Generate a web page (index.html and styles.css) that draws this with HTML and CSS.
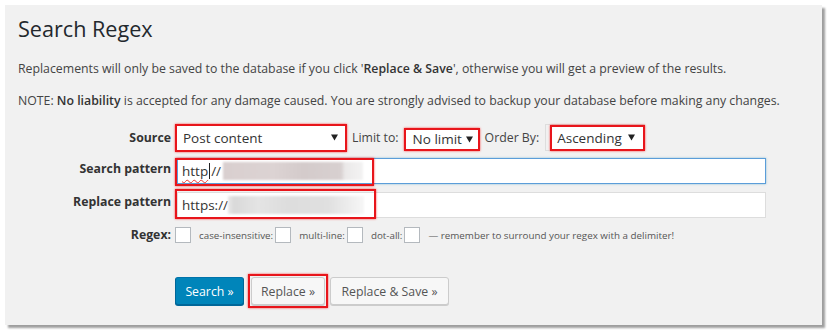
FILE: index.html
```html
<!DOCTYPE html>
<html>
<head>
<meta charset="utf-8">
<link rel="stylesheet" href="styles.css">
</head>
<body>
<div class="frame">
  <h1 class="title">Search Regex</h1>
  <p class="note">Replacements will only be saved to the database if you click '<b>Replace &amp; Save</b>', otherwise you will get a preview of the results.</p>
  <p class="note">NOTE: <b>No liability</b> is accepted for any damage caused. You are strongly advised to backup your database before making any changes.</p>

  <div class="form">
    <div class="row row-source">
      <div class="label">Source</div>
      <div class="field inline">
        <div class="select marked sel-source"><span>Post content</span><svg class="arrow" width="7" height="7" viewBox="0 0 7 7"><path d="M0 0.5H7L3.5 6.5Z" fill="#222"/></svg></div>
        <span class="inl-label">Limit to:</span>
        <div class="select marked sel-limit"><span>No limit</span><svg class="arrow" width="7" height="7" viewBox="0 0 7 7"><path d="M0 0.5H7L3.5 6.5Z" fill="#222"/></svg></div>
        <span class="inl-label">Order By:</span>
        <div class="ghost">
          <div class="select marked sel-order"><span>Ascending</span><svg class="arrow" width="7" height="7" viewBox="0 0 7 7"><path d="M0 0.5H7L3.5 6.5Z" fill="#222"/></svg></div>
        </div>
      </div>
    </div>

    <div class="row row-search">
      <div class="label">Search pattern</div>
      <div class="field">
        <div class="input focus">
          <span class="typed"><span class="spell">http</span><span class="caret"></span>//</span>
          <span class="blur b1"></span>
        </div>
        <div class="mark mark-search"></div>
      </div>
    </div>

    <div class="row row-replace">
      <div class="label">Replace pattern</div>
      <div class="field">
        <div class="input">
          <span class="typed">https://</span>
          <span class="blur b2"></span>
        </div>
        <div class="mark mark-replace"></div>
      </div>
    </div>

    <div class="row row-regex">
      <div class="label">Regex:</div>
      <div class="field inline small">
        <span class="check"></span>
        <span class="opt">case-insensitive:</span><span class="check"></span>
        <span class="opt">multi-line:</span><span class="check"></span>
        <span class="opt">dot-all:</span><span class="check"></span>
        <span class="opt">— remember to surround your regex with a delimiter!</span>
      </div>
    </div>

    <div class="row row-buttons">
      <div class="label"></div>
      <div class="field inline buttons">
        <button class="btn primary">Search »</button>
        <div class="btn-mark"><button class="btn">Replace »</button></div>
        <button class="btn last">Replace &amp; Save »</button>
      </div>
    </div>
  </div>
</div>
</body>
</html>
```

FILE: styles.css
```css
* { box-sizing: border-box; }
html, body { margin: 0; padding: 0; background: #fff; }
body {
  font-family: "Open Sans", "Noto Sans", "DejaVu Sans", sans-serif;
  color: #444;
  width: 828px;
  height: 331px;
  overflow: hidden;
}
.frame {
  margin: 5px 0 0 5px;
  width: 817px;
  height: 320px;
  background: #f1f1f1;
  box-shadow: 3px 3px 2px rgba(0,0,0,0.38);
  padding: 9px 0 0 13px;
}
.title {
  margin: 0;
  font-size: 21.6px;
  font-weight: 400;
  line-height: 30px;
  color: #23282d;
}
.note {
  margin: 16px 0 0 0;
  font-size: 12.3px;
  line-height: 18px;
}
.note + .note { margin-top: 14px; }
.note b { color: #333; font-weight: 600; }

.form { margin-top: 13px; }
.row { display: flex; }
.label {
  width: 153px;
  flex: none;
  text-align: right;
  font-weight: 700;
  font-size: 12.3px;
  color: #333;
}
.field { position: relative; margin-left: 4px; flex: none; }
.inline { display: flex; align-items: center; }

.row-source { height: 29px; align-items: center; }
.row-source .label { line-height: 29px; }
.select {
  background: #fff;
  display: flex;
  align-items: center;
  justify-content: space-between;
  font-size: 13.5px;
  color: #333;
  padding: 0 6px 0 6px;
}
.select .arrow { flex: none; }
.marked {
  border: 2px solid #e8151b;
  box-shadow: 0 0 2px rgba(255,0,0,0.7);
}
.sel-source { width: 172px; height: 28px; padding-right: 7px; }
.sel-limit { width: 76px; height: 23px; margin-top: 3px; padding-left: 7px; padding-right: 5px; }
.sel-order { width: 95px; height: 26px; margin-left: 4px; padding-left: 5px; padding-right: 8px; }
.ghost {
  border: 1px solid #ddd;
  border-right: none;
  height: 27px;
  display: flex;
  align-items: center;
}
.inl-label { font-size: 12.3px; color: #444; margin: 0 5px 0 5px; }
.inl-label + .ghost { margin-left: 1px; }

.row-search { margin-top: 6px; height: 28px; }
.row-search .label, .row-replace .label { padding-top: 2px; line-height: 18px; }
.input {
  width: 589px;
  height: 26px;
  margin-left: 2px;
  margin-top: 1px;
  background: #fff;
  border: 1px solid #ddd;
  display: flex;
  align-items: center;
  padding-left: 4px;
  font-size: 13.5px;
  color: #333;
}
.input.focus { border-color: #5b9dd9; box-shadow: 0 0 2px rgba(30,140,190,0.5); margin-top: 0; }
.typed { position: relative; white-space: nowrap; }
.spell {
  text-decoration: underline wavy #e33;
  text-decoration-thickness: 1px;
  text-underline-offset: 3px;
}
.caret {
  display: inline-block;
  width: 1px;
  height: 16px;
  background: #222;
  vertical-align: -3px;
  margin: 0 1px;
}
.blur {
  display: inline-block;
  height: 18px;
  filter: blur(1px);
}
.b1 {
  width: 140px;
  margin-left: 2px;
  background: linear-gradient(90deg, #d9cfcf 0, #dcd3d3 50px, #d4cbcb 80px, #d8d0d0 118px, #ebe9e9 122px, #f3f3f3 140px);
}
.b2 {
  width: 136px;
  margin-left: 0;
  background: linear-gradient(90deg, #e9e9e9 0, #d9d9d9 6px, #e4e4e4 30px, #dddddd 60px, #e0e0e0 100px, #f0f0f0 125px, #f7f7f7 136px);
}
.mark {
  position: absolute;
  left: 0;
  border: 2px solid #e8151b;
  box-shadow: 0 0 2px rgba(255,0,0,0.7);
  pointer-events: none;
}
.mark-search { top: 0; width: 199px; height: 28px; }
.mark-replace { top: -2px; width: 201px; height: 30px; }

.row-replace { margin-top: 5px; height: 28px; }

.row-regex { margin-top: 5px; height: 22px; align-items: center; }
.row-regex .label { line-height: 22px; }
.small { font-size: 9.8px; color: #555; }
.check {
  display: inline-block;
  width: 16px;
  height: 16px;
  background: #fff;
  border: 1px solid #b4b9be;
  flex: none;
}
.opt { margin: 0 2px 0 8px; white-space: nowrap; }

.row-buttons { margin-top: 28px; }
.buttons { margin-left: 4px; }
.btn {
  font-family: inherit;
  font-size: 12.3px;
  height: 28px;
  padding: 0;
  background: #f7f7f7;
  border: 1px solid #ccc;
  border-radius: 3px;
  box-shadow: 0 1px 0 #ccc;
  color: #555;
  margin: 0;
  white-space: nowrap;
  text-align: center;
}
.btn.primary {
  background: #0085ba;
  border-color: #0073aa #006799 #006799;
  box-shadow: 0 1px 0 #006799;
  color: #fff;
  width: 69px;
}
.btn-mark {
  margin-left: 4px;
  border: 2px solid #e8151b;
  box-shadow: 0 0 2px rgba(255,0,0,0.7);
  padding: 1px;
  height: 34px;
  display: flex;
}
.btn-mark .btn { width: 74px; height: 28px; }
.btn.last { margin-left: 2px; width: 119px; }
```
